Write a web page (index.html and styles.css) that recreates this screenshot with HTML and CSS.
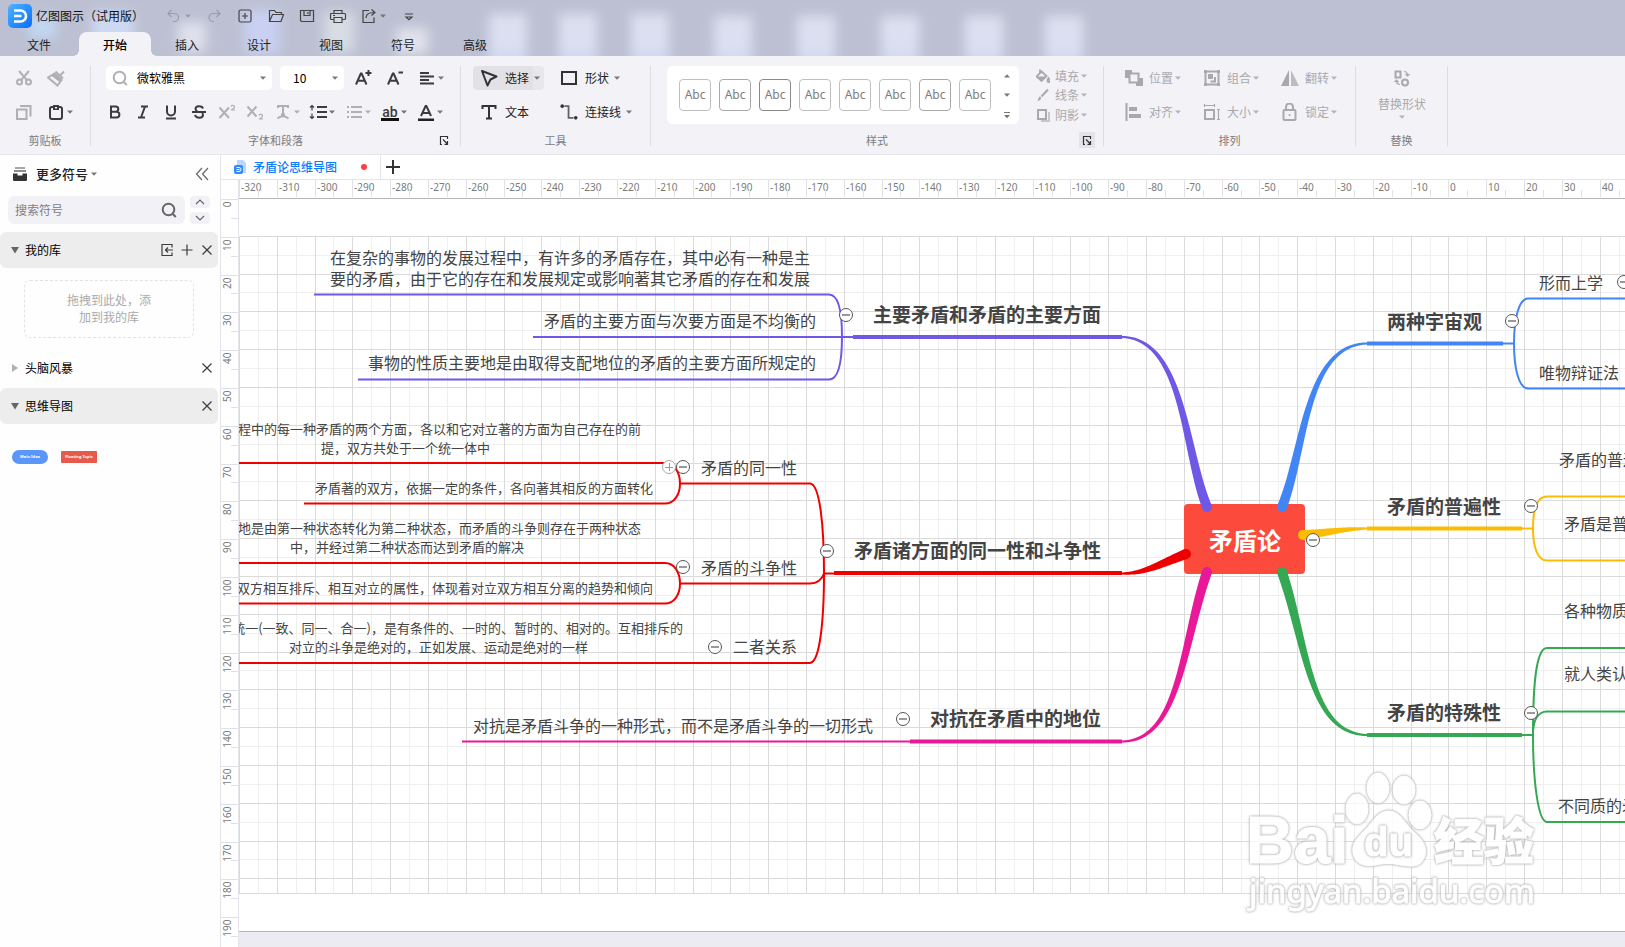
FILE: index.html
```html
<!DOCTYPE html>
<html lang="zh-CN">
<head>
<meta charset="utf-8">
<title>亿图图示（试用版）</title>
<link rel="stylesheet" href="styles.css">
</head>
<body>
<svg class="sprite" aria-hidden="true">
  <symbol id="caret" viewBox="0 0 8 8"><path d="M1 2.500h6L4 5.800z" fill="currentColor"/></symbol>
  <symbol id="i-undo" viewBox="0 0 18 18"><path d="M6.500 3 3 6.500 6.500 10M3 6.500h6.500a4 4 0 0 1 0 8H8" class="s1"/></symbol>
  <symbol id="i-redo" viewBox="0 0 18 18"><path d="M11.500 3 15 6.500 11.500 10M15 6.500H8a4 4 0 0 0 0 8h1" class="s1"/></symbol>
  <symbol id="i-new" viewBox="0 0 18 18"><rect x="3" y="3" width="12" height="12" rx="1.500" class="s1"/><path d="M9 6v6M6 9h6" class="s1"/></symbol>
  <symbol id="i-open" viewBox="0 0 18 18"><path d="M2.500 14.500V3.500h5l1.500 2h5.500v2M2.500 14.500l3-7h11l-2.500 7z" class="s1"/></symbol>
  <symbol id="i-save" viewBox="0 0 18 18"><path d="M2.500 3.500h13v11h-12l-1-1zM6 3.500v5h6v-5M10 5v2" class="s1"/></symbol>
  <symbol id="i-print" viewBox="0 0 18 18"><path d="M5 6.500v-3h8v3M5 12.500H2.500a1 1 0 0 1-1-1v-4a1 1 0 0 1 1-1h13a1 1 0 0 1 1 1v4a1 1 0 0 1-1 1H13M5 10.500h8v5H5zM4 8.500h2" class="s1"/></symbol>
  <symbol id="i-export" viewBox="0 0 18 18"><path d="M9 3.500H3v12h11v-5M6 11c0-4 3-5.500 8-5.500M11.500 2.500l3.500 3-3.500 3" class="s1"/></symbol>
  <symbol id="i-more" viewBox="0 0 18 18"><path d="M5 7h8M6 10l3 2.800L12 10z" class="s1"/></symbol>
  <symbol id="i-cut" viewBox="0 0 18 18"><g class="s2"><circle cx="4.500" cy="13" r="2.500"/><circle cx="13.500" cy="13" r="2.500"/><path d="M4 2l8 9.200M14 2l-8 9.200"/></g></symbol>
  <symbol id="i-brush" viewBox="0 0 18 18"><path d="M17 2.500 13.500 6" class="s2" stroke-width="4"/><path d="M8.500 2.500l7.500 7" class="s2"/><path d="M7.500 4.500l7 6.500-4 5.500L1 8.500z" class="s2"/><path d="M8 4.500l6.500 6-2 2.500-8-6z" fill="currentColor"/></symbol>
  <symbol id="i-copy" viewBox="0 0 18 18"><path d="M2 6.500h9.500V16H2zM5 3h10.500v10.500" class="s2"/></symbol>
  <symbol id="i-paste" viewBox="0 0 18 18"><rect x="3" y="4" width="12" height="12" rx="2" class="s2"/><path d="M6 2h6v5H6z" fill="currentColor"/><path d="M8 4h2v1.500H8z" fill="#f3f2f7"/></symbol>
  <symbol id="i-search" viewBox="0 0 18 18"><circle cx="8.500" cy="8.500" r="5.800" class="s2"/><path d="M12.800 13l3 3" class="s2"/></symbol>
  <symbol id="i-aplus" viewBox="0 0 18 18"><path d="M2 15.500 6.800 4.500h.8L12.500 15.500M3.800 11.800h7M11.500 4h6M14.500 1v6" class="s2"/></symbol>
  <symbol id="i-aminus" viewBox="0 0 18 18"><path d="M2 15.500 6.800 4.500h.8L12.500 15.500M3.800 11.800h7M12.500 3.500h4.500" class="s2"/></symbol>
  <symbol id="i-align" viewBox="0 0 18 18"><path d="M2 4h9M2 7.500h14M2 11h9M2 14.500h14" class="s2"/></symbol>
  <symbol id="i-bold" viewBox="0 0 18 18"><path d="M5 3.500h4.700a2.600 2.600 0 0 1 0 5.200H5zM5 8.700h5.500a2.900 2.900 0 0 1 0 5.800H5z" class="s2"/></symbol>
  <symbol id="i-italic" viewBox="0 0 18 18"><path d="M7 3.500h7M4 14.500h7M11 3.500l-4 11" class="s2"/></symbol>
  <symbol id="i-under" viewBox="0 0 18 18"><path d="M5 2.500v6a4 4 0 0 0 8 0v-6M4 15.500h10" class="s2"/></symbol>
  <symbol id="i-strike" viewBox="0 0 18 18"><path d="M13 5.500C12 2.500 5.500 2.500 5.500 6c0 1.500 1 2 2.500 3M5 12c1 3.500 8 3.500 8 0 0-1-.4-1.500-1-2M2 9h14" class="s2"/></symbol>
  <symbol id="i-sup" viewBox="0 0 18 18"><path d="M1.500 4.500 11 15M11 4.500 1.500 15" class="s2"/><path d="M13 3.500c.5-1.500 3.500-1.500 3.500.5C16.500 5.500 13 7 13 7h4" class="s1"/></symbol>
  <symbol id="i-sub" viewBox="0 0 18 18"><path d="M1.500 3.500 10.500 13.500M10.500 3.500 1.500 13.500" class="s2"/><path d="M13 12.500c.5-1.500 3.500-1.500 3.500.5 0 1.500-3.500 3-3.500 3h4" class="s1"/></symbol>
  <symbol id="i-case" viewBox="0 0 18 18"><path d="M4 5V3h10v2M9 3v8M7 11.500h4M3.500 15.500c3-3 8-3 11 0" class="s2"/></symbol>
  <symbol id="i-spacing" viewBox="0 0 18 18"><path d="M8 4h10M8 9h10M8 14h10" class="s2"/><path d="M3 3.500v4M3 10.500v4M1 4.500 3 2.500l2 2M1 13.500l2 2 2-2" class="s1"/></symbol>
  <symbol id="i-list" viewBox="0 0 18 18"><path d="M6 4h11M6 9h11M6 14h11M2 4h2M2 9h2M2 14h2" class="s2"/></symbol>
  <symbol id="i-color" viewBox="0 0 18 18"><path d="M4 13 8.600 3h.8L14 13M5.500 10h7" class="s2"/><path d="M1 15.500h16v2.500H1z" fill="#222"/></symbol>
  <symbol id="i-launch" viewBox="0 0 16 16"><path d="M6 12.500H4.500v-8h7V7M7 7.500l4.500 4.500M11.500 9v3.300H8.500" class="s1"/></symbol>
  <symbol id="i-select" viewBox="0 0 18 18"><path d="M2 2 16.500 7.500 10.500 10.500 7.500 16.500z" class="s2" stroke-linejoin="round"/></symbol>
  <symbol id="i-rect" viewBox="0 0 18 18"><rect x="2" y="3" width="14" height="12" class="s2"/></symbol>
  <symbol id="i-text" viewBox="0 0 18 18"><path d="M2.500 6V3h13v3M9 3v12.500M6 15.500h6" class="s2"/></symbol>
  <symbol id="i-conn" viewBox="0 0 20 18"><circle cx="2.500" cy="2.500" r="2" fill="currentColor"/><circle cx="17.500" cy="15.500" r="2" fill="currentColor"/><path d="M5 2.500h4.500v13H15" class="s2" opacity=".75"/></symbol>
  <symbol id="i-fill" viewBox="0 0 14 14"><path d="M4 .5v3M5.500 2.500l5 4.500-5 5-5-4.500zM12.500 9c1.500 2 1.500 4 0 4s-1.500-2 0-4z" fill="none" stroke="currentColor" stroke-width="1.800"/><path d="M1 7.500h9l-4.500 4z" fill="currentColor"/></symbol>
  <symbol id="i-line" viewBox="0 0 14 14"><path d="M12 1.500 5.500 8.500" class="s2"/><path d="M1 13c1.500-.5 1-4 3-4.500 2 1 1.500 4-3 4.500z" fill="currentColor"/></symbol>
  <symbol id="i-shadow" viewBox="0 0 14 14"><path d="M5 13h8V4" class="s2" opacity=".6"/><rect x="2" y="2" width="8" height="9" class="s2"/></symbol>
  <symbol id="i-pos" viewBox="0 0 18 18"><path d="M0 1h7v3H4v5H0zM18 17h-7v-3h3V9h4z" fill="currentColor"/><rect x="4.500" y="4.500" width="9" height="9" class="s2"/></symbol>
  <symbol id="i-group" viewBox="0 0 18 18"><rect x="2.500" y="2.500" width="13" height="13" class="s2"/><path d="M1 1h3v3H1zM14 1h3v3h-3zM1 14h3v3H1zM14 14h3v3h-3zM5 5h5v5H5z" fill="currentColor"/><path d="M12 8v4.500H7.500" class="s2"/></symbol>
  <symbol id="i-flip" viewBox="0 0 18 18"><path d="M8 1v16H0z" fill="currentColor"/><path d="M10 1v16h8z" fill="currentColor" opacity=".75"/></symbol>
  <symbol id="i-lalign" viewBox="0 0 18 18"><path d="M1.500 0v18" class="s2"/><path d="M4 4h8v4H4zM4 11h12v4H4z" fill="currentColor"/></symbol>
  <symbol id="i-size" viewBox="0 0 18 18"><rect x="2" y="7" width="9" height="9" class="s2"/><path d="M1 2.500h11M1.500 1v3M11.500 1v3M15.500 6v11M14 6.500h3M14 16.500h3" class="s1"/></symbol>
  <symbol id="i-lock" viewBox="0 0 18 18"><rect x="2.500" y="7" width="12" height="10" rx="1" class="s2"/><path d="M5 7V4a3.500 3.500 0 0 1 7 0v3M7.800 12h1.500" class="s2"/></symbol>
  <symbol id="i-swap" viewBox="0 0 18 18"><rect x="2.500" y="2.500" width="5" height="6" class="s2"/><circle cx="12" cy="13.500" r="3" class="s2"/><path d="M11 2.500c2 0 3.500 1 3.500 4M12.500 5l2 2 2-2M7 15.500c-2 0-3.500-1-3.500-4M1.500 13l2-2 2 2" class="s1"/></symbol>
  <symbol id="i-x" viewBox="0 0 14 14"><path d="M2.500 2.500l9 9M11.500 2.500l-9 9" class="s1"/></symbol>
  <symbol id="i-plus" viewBox="0 0 14 14"><path d="M7 1.500v11M1.500 7h11" class="s1"/></symbol>
  <symbol id="i-import" viewBox="0 0 14 14"><path d="M12 4.500v-3H2v11h10v-3M13 7H5.500M8 4.500 5.500 7 8 9.500" class="s1"/></symbol>
  <symbol id="i-down" viewBox="0 0 10 10"><path d="M1 2h8L5 8.500z" fill="currentColor"/></symbol>
  <symbol id="i-right" viewBox="0 0 10 10"><path d="M2 1v8l6-4z" fill="currentColor"/></symbol>
</svg>

<header class="titlebar">
  <svg class="glow" aria-hidden="true">
    <defs>
      <filter id="soft" x="-10%" y="-50%" width="120%" height="200%"><feGaussianBlur stdDeviation="6"/></filter>
      <linearGradient id="pane" x1="0" y1="0" x2="0" y2="1"><stop offset="0" stop-color="#dee0f0"/><stop offset=".6" stop-color="#dcdff0"/><stop offset="1" stop-color="#c3d4f6"/></linearGradient>
    </defs>
    <g filter="url(#soft)" fill="url(#pane)">
      <rect x="28" y="16" width="28" height="22" fill="#c2d8f2"/>
      <rect x="92" y="12" width="42" height="46" fill="#cdd9f3"/>
      <rect x="178" y="22" width="28" height="30" fill="#e0e0ec"/>
      <rect x="244" y="10" width="36" height="44" fill="#c9d0f2"/>
      <rect x="324" y="12" width="30" height="40" fill="#d7dde4"/>
      <rect x="396" y="28" width="32" height="26" fill="#e2e2ec"/>
      <rect x="489" y="14" width="38" height="54"/><rect x="559" y="14" width="38" height="54"/>
      <rect x="631" y="14" width="38" height="54"/><rect x="714" y="16" width="38" height="54"/>
      <rect x="797" y="16" width="38" height="54"/><rect x="881" y="16" width="38" height="54"/>
      <rect x="965" y="16" width="38" height="54"/><rect x="1045" y="16" width="38" height="54"/>
    </g>
  </svg>
  <div class="quickbar">
    <svg class="logo" viewBox="0 0 24 24" role="img" aria-label="亿图图示">
      <defs><linearGradient id="lg" x1="0" y1="0" x2="1" y2="1"><stop offset="0" stop-color="#4db5ff"/><stop offset="1" stop-color="#0a6cff"/></linearGradient></defs>
      <rect width="24" height="24" rx="5" fill="url(#lg)"/>
      <path d="M6 6.500h6.500a5.500 5.500 0 0 1 0 11H6M6 12h7.500" fill="none" stroke="#fff" stroke-width="2.600"/>
    </svg>
    <h1 class="app-name">亿图图示（试用版）</h1>
    <div class="quick-tools">
      <button class="ico faded" aria-label="撤销"><svg class="i18"><use href="#i-undo"/></svg><svg class="car"><use href="#caret"/></svg></button>
      <button class="ico faded" aria-label="重做"><svg class="i18"><use href="#i-redo"/></svg></button>
      <button class="ico" aria-label="新建"><svg class="i18"><use href="#i-new"/></svg></button>
      <button class="ico" aria-label="打开"><svg class="i18"><use href="#i-open"/></svg></button>
      <button class="ico" aria-label="保存"><svg class="i18"><use href="#i-save"/></svg></button>
      <button class="ico" aria-label="打印"><svg class="i18"><use href="#i-print"/></svg></button>
      <button class="ico" aria-label="导出"><svg class="i18"><use href="#i-export"/></svg><svg class="car"><use href="#caret"/></svg></button>
      <button class="ico" aria-label="更多"><svg class="i18"><use href="#i-more"/></svg></button>
    </div>
  </div>
  <nav class="menu">
    <button class="menu-tab">文件</button><button class="menu-tab active">开始</button><button class="menu-tab">插入</button><button class="menu-tab">设计</button><button class="menu-tab">视图</button><button class="menu-tab">符号</button><button class="menu-tab">高级</button>
  </nav>
</header>

<section class="ribbon">
  <div class="group clipboard">
    <div class="row"><button class="ico off" aria-label="剪切"><svg class="i18"><use href="#i-cut"/></svg></button><button class="ico off" aria-label="格式刷"><svg class="i18"><use href="#i-brush"/></svg></button></div>
    <div class="row"><button class="ico off" aria-label="复制"><svg class="i18"><use href="#i-copy"/></svg></button><button class="ico" aria-label="粘贴"><svg class="i18"><use href="#i-paste"/></svg><svg class="car"><use href="#caret"/></svg></button></div>
    <div class="caption"><span>剪贴板</span></div>
  </div>
  <div class="group font">
    <div class="row">
      <label class="combo family"><svg class="i18 off"><use href="#i-search"/></svg><select aria-label="字体"><option>微软雅黑</option></select><svg class="car"><use href="#caret"/></svg></label>
      <label class="combo size"><select aria-label="字号"><option>10</option></select><svg class="car"><use href="#caret"/></svg></label>
      <div class="cluster wide"><button class="ico" aria-label="增大字号"><svg class="i18"><use href="#i-aplus"/></svg></button><button class="ico" aria-label="减小字号"><svg class="i18"><use href="#i-aminus"/></svg></button><button class="ico" aria-label="对齐方式"><svg class="i18"><use href="#i-align"/></svg><svg class="car"><use href="#caret"/></svg></button></div>
    </div>
    <div class="row">
      <div class="cluster">
        <button class="ico" aria-label="加粗"><svg class="i18"><use href="#i-bold"/></svg></button><button class="ico" aria-label="斜体"><svg class="i18"><use href="#i-italic"/></svg></button><button class="ico" aria-label="下划线"><svg class="i18"><use href="#i-under"/></svg></button><button class="ico" aria-label="删除线"><svg class="i18"><use href="#i-strike"/></svg></button><button class="ico off" aria-label="上标"><svg class="i18"><use href="#i-sup"/></svg></button><button class="ico off" aria-label="下标"><svg class="i18"><use href="#i-sub"/></svg></button><button class="ico off" aria-label="文字方向"><svg class="i18"><use href="#i-case"/></svg><svg class="car"><use href="#caret"/></svg></button>
      </div>
      <div class="cluster snug">
        <button class="ico" aria-label="行距"><svg class="i18"><use href="#i-spacing"/></svg><svg class="car"><use href="#caret"/></svg></button><button class="ico off" aria-label="项目符号"><svg class="i18"><use href="#i-list"/></svg><svg class="car"><use href="#caret"/></svg></button><button class="ico" aria-label="突出显示"><span class="highlight">ab</span><svg class="car"><use href="#caret"/></svg></button><button class="ico" aria-label="字体颜色"><svg class="i18"><use href="#i-color"/></svg><svg class="car"><use href="#caret"/></svg></button>
      </div>
    </div>
    <div class="caption"><span>字体和段落</span><button class="launch" aria-label="字体设置"><svg class="i16"><use href="#i-launch"/></svg></button></div>
  </div>
  <div class="group tools">
    <div class="pairs">
      <button class="tool on"><svg class="i18"><use href="#i-select"/></svg><span>选择</span><svg class="car"><use href="#caret"/></svg></button>
      <button class="tool"><svg class="i18"><use href="#i-rect"/></svg><span>形状</span><svg class="car"><use href="#caret"/></svg></button>
      <button class="tool"><svg class="i18"><use href="#i-text"/></svg><span>文本</span></button>
      <button class="tool"><svg class="i18"><use href="#i-conn"/></svg><span>连接线</span><svg class="car"><use href="#caret"/></svg></button>
    </div>
    <div class="caption"><span>工具</span></div>
  </div>
  <div class="group styles">
    <div class="style-row">
      <div class="gallery">
        <button class="swatch">Abc</button><button class="swatch mid">Abc</button><button class="swatch dark">Abc</button><button class="swatch">Abc</button><button class="swatch">Abc</button><button class="swatch">Abc</button><button class="swatch mid">Abc</button><button class="swatch">Abc</button>
        <div class="pager">
          <button class="ico" aria-label="上一行"><svg class="car" viewBox="0 0 8 8"><path d="M1 5.500h6L4 2.200z" fill="currentColor"/></svg></button>
          <button class="ico" aria-label="下一行"><svg class="car"><use href="#caret"/></svg></button>
          <button class="ico" aria-label="全部样式"><svg class="car" viewBox="0 0 8 8"><path d="M1 1h6v1H1zM1 4h6L4 7.300z" fill="currentColor"/></svg></button>
        </div>
      </div>
      <div class="stack">
        <button class="mini"><svg class="i14"><use href="#i-fill"/></svg><span>填充</span><svg class="car"><use href="#caret"/></svg></button>
        <button class="mini"><svg class="i14"><use href="#i-line"/></svg><span>线条</span><svg class="car"><use href="#caret"/></svg></button>
        <button class="mini"><svg class="i14"><use href="#i-shadow"/></svg><span>阴影</span><svg class="car"><use href="#caret"/></svg></button>
      </div>
    </div>
    <div class="caption"><span>样式</span><button class="launch lit" aria-label="样式设置"><svg class="i16"><use href="#i-launch"/></svg></button></div>
  </div>
  <div class="group arrange">
    <div class="triples">
      <button class="mini"><svg class="i18"><use href="#i-pos"/></svg><span>位置</span><svg class="car"><use href="#caret"/></svg></button>
      <button class="mini"><svg class="i18"><use href="#i-group"/></svg><span>组合</span><svg class="car"><use href="#caret"/></svg></button>
      <button class="mini"><svg class="i18"><use href="#i-flip"/></svg><span>翻转</span><svg class="car"><use href="#caret"/></svg></button>
      <button class="mini"><svg class="i18"><use href="#i-lalign"/></svg><span>对齐</span><svg class="car"><use href="#caret"/></svg></button>
      <button class="mini"><svg class="i18"><use href="#i-size"/></svg><span>大小</span><svg class="car"><use href="#caret"/></svg></button>
      <button class="mini"><svg class="i18"><use href="#i-lock"/></svg><span>锁定</span><svg class="car"><use href="#caret"/></svg></button>
    </div>
    <div class="caption"><span>排列</span></div>
  </div>
  <div class="group replace">
    <button class="tall"><svg class="i18"><use href="#i-swap"/></svg><span>替换形状</span><svg class="car"><use href="#caret"/></svg></button>
    <div class="caption"><span>替换</span></div>
  </div>
</section>

<main class="work">
  <aside class="library">
    <div class="lib-head">
      <svg class="drawer" viewBox="0 0 14 14"><path d="M2 1h10" stroke="#8a8a8a" stroke-width="1.500"/><path d="M1 4h12" stroke="#666" stroke-width="1.500"/><path d="M0 6.500h4.500v2h5v-2H14V13a1 1 0 0 1-1 1H1a1 1 0 0 1-1-1z" fill="#333"/></svg>
      <button class="lib-title">更多符号<svg class="car"><use href="#caret"/></svg></button>
      <button class="ico fold" aria-label="收起"><svg class="i14" viewBox="0 0 14 14"><path d="M7 1 1.500 7 7 13M13 1 7.500 7 13 13" class="s1"/></svg></button>
    </div>
    <div class="lib-search">
      <label class="search"><input type="text" placeholder="搜索符号" aria-label="搜索符号"><svg class="i18"><use href="#i-search"/></svg></label>
      <div class="steppers"><button aria-label="上一个"><svg viewBox="0 0 10 6"><path d="M1 5l4-4 4 4" class="s1"/></svg></button><button aria-label="下一个"><svg viewBox="0 0 10 6"><path d="M1 1l4 4 4-4" class="s1"/></svg></button></div>
    </div>
    <div class="lib-row shaded"><svg class="tri"><use href="#i-down"/></svg><h2>我的库</h2><button class="ico" aria-label="导入"><svg class="i14"><use href="#i-import"/></svg></button><button class="ico" aria-label="添加"><svg class="i14"><use href="#i-plus"/></svg></button><button class="ico" aria-label="关闭我的库"><svg class="i14"><use href="#i-x"/></svg></button></div>
    <p class="drop">拖拽到此处，添<br>加到我的库</p>
    <div class="lib-row"><svg class="tri pale"><use href="#i-right"/></svg><h2>头脑风暴</h2><button class="ico" aria-label="关闭头脑风暴"><svg class="i14"><use href="#i-x"/></svg></button></div>
    <div class="lib-row shaded"><svg class="tri"><use href="#i-down"/></svg><h2>思维导图</h2><button class="ico" aria-label="关闭思维导图"><svg class="i14"><use href="#i-x"/></svg></button></div>
    <div class="shapes"><button class="shape idea">Main Idea</button><button class="shape topic">Floating Topic</button></div>
  </aside>

  <section class="editor">
    <div class="doc-tabs">
      <div class="doc-tab"><svg class="doc-ico" viewBox="0 0 12 14"><path d="M3 0h6l3 3v10H3z" fill="#b9d8ff"/><rect y="5" width="9" height="9" rx="2" fill="#2b8cff"/><path d="M2.500 7.500h2.500a2 2 0 0 1 0 4H2.500M2.500 9.500h3" fill="none" stroke="#fff"/></svg><span>矛盾论思维导图</span><i class="unsaved"></i></div>
      <button class="ico add" aria-label="新建页面"><svg class="i14" viewBox="0 0 14 14"><path d="M7 0v14M0 7h14" stroke="#333" stroke-width="2"/></svg></button>
    </div>
    <div class="sheet">
      <div class="corner"></div>
      <svg class="ruler-x" id="ruler-x"></svg>
      <svg class="ruler-y" id="ruler-y"></svg>
      <div class="canvas" id="canvas">
        <svg class="map">
          <g id="grid"></g>
          <g transform="translate(-239 -198)">
            <rect x="1184" y="504" width="121" height="70" rx="4" fill="#fc4a3c"/>
            <g class="link purple">
              <path d="M314 294.500H829C838 294.500 842 310 842 336.500C842 364 838 379.500 829 379.500H358M533 337H853"/><path class="bar" d="M853 337H1122"/>
            </g>
            <g class="link red">
              <path d="M239 463H665C674 463 680 472 680 483.500C680 495 674 503.500 665 503.500H304M239 563H665C674 563 680 572 680 583.500C680 595 674 603.500 665 603.500H239M239 663H810C820 662 824 620 824 573C824 527 820 484 810 483.500H680M680 583.500H810C818 583.500 822 579 824 573.500H834"/><path class="bar" d="M834 573H1122"/>
            </g>
            <g class="link pink"><path d="M462 741.500H910"/><path class="bar" d="M910 741.500H1122"/></g>
            <g class="link blue"><path d="M1503 343.500H1514C1514 318 1519 298.500 1528 298.500H3000M1514 343.500C1514 369 1519 388.500 1528 388.500H3000"/><path class="bar" d="M1367 343.500H1503"/></g>
            <g class="link yellow"><path d="M1522 528.500H1533C1533 507 1538 496.500 1547 496.500H3000M1533 528.500C1533 548 1538 560.500 1547 560.500H3000"/><path class="bar" d="M1367 528.500H1522"/></g>
            <g class="link green"><path d="M1522 735H1533C1533 685 1536 648 1547 648H3000M1533 735C1533 720 1538 711.500 1547 711.500H3000M1533 735C1533 780 1538 822 1547 822H3000"/><path class="bar" d="M1367 735H1522"/></g>
            <g id="limbs"></g>
            <text class="t-root" x="1209" y="550">矛盾论</text>
            <g class="t-main">
              <text x="873" y="322">主要矛盾和矛盾的主要方面</text>
              <text x="854" y="558">矛盾诸方面的同一性和斗争性</text>
              <text x="930" y="726">对抗在矛盾中的地位</text>
              <text x="1387" y="329">两种宇宙观</text>
              <text x="1387" y="514">矛盾的普遍性</text>
              <text x="1387" y="720">矛盾的特殊性</text>
            </g>
            <g class="t-sub">
              <text x="330" y="264">在复杂的事物的发展过程中，有许多的矛盾存在，其中必有一种是主</text>
              <text x="330" y="285">要的矛盾，由于它的存在和发展规定或影响著其它矛盾的存在和发展</text>
              <text x="544" y="327">矛盾的主要方面与次要方面是不均衡的</text>
              <text x="368" y="369">事物的性质主要地是由取得支配地位的矛盾的主要方面所规定的</text>
              <text x="701" y="474">矛盾的同一性</text>
              <text x="701" y="574">矛盾的斗争性</text>
              <text x="733" y="653">二者关系</text>
              <text x="473" y="732">对抗是矛盾斗争的一种形式，而不是矛盾斗争的一切形式</text>
              <text x="1539" y="289">形而上学</text>
              <text x="1539" y="379">唯物辩证法</text>
              <text x="1559" y="466">矛盾的普遍性</text>
              <text x="1564" y="530">矛盾是普遍的</text>
              <text x="1564" y="617">各种物质</text>
              <text x="1564" y="680">就人类认</text>
              <text x="1558" y="812">不同质的矛</text>
            </g>
            <g class="t-leaf">
              <text x="238" y="434">程中的每一种矛盾的两个方面，各以和它对立著的方面为自己存在的前</text>
              <text x="321" y="453">提，双方共处于一个统一体中</text>
              <text x="315" y="493">矛盾著的双方，依据一定的条件，各向著其相反的方面转化</text>
              <text x="238" y="533">地是由第一种状态转化为第二种状态，而矛盾的斗争则存在于两种状态</text>
              <text x="290" y="552">中，并经过第二种状态而达到矛盾的解决</text>
              <text x="237" y="593">双方相互排斥、相互对立的属性，体现着对立双方相互分离的趋势和倾向</text>
              <text x="683" y="633" text-anchor="end">统一(一致、同一、合一)，是有条件的、一时的、暂时的、相对的。互相排斥的</text>
              <text x="289" y="652">对立的斗争是绝对的，正如发展、运动是绝对的一样</text>
            </g>
            <g class="mark">
              <text class="m-latin" x="1246" y="863">Bai</text>
              <g class="m-paw"><ellipse cx="1357" cy="809" rx="11" ry="15"/><ellipse cx="1378" cy="788" rx="11" ry="15"/><ellipse cx="1404" cy="790" rx="11" ry="14"/><ellipse cx="1420" cy="815" rx="11" ry="14"/>
              <path d="M1389 811C1400 811 1405 824 1415 833C1424 840 1428 850 1424 858C1420 869 1408 866 1400 865C1392 863 1384 863 1376 865C1366 867 1355 865 1353 853C1351 843 1359 836 1366 829C1373 822 1377 811 1389 811Z"/></g>
              <text class="m-du" x="1364" y="856">du</text>
              <text class="m-cjk" x="1434" y="860">经验</text>
              <text class="m-url" x="1249" y="903">jingyan.baidu.com</text>
            </g>
          </g>
        </svg>
      </div>
    </div>
  </section>
</main>
<script src="map.js"></script>
</body>
</html>
```
FILE: styles.css
```css
* { box-sizing: border-box; }
body {
  margin: 0;
  height: 100vh;
  display: flex;
  flex-direction: column;
  overflow: hidden;
  background: #fff;
  color: #222;
  font: 12px/18px "Noto Sans CJK SC", "Noto Sans", sans-serif;
}
button, input, select { font: inherit; color: inherit; border: 0; background: none; padding: 0; margin: 0; }
h1, h2, p { margin: 0; font-size: 12px; font-weight: 400; }
svg { display: block; flex: none; }
.sprite { position: absolute; width: 0; height: 0; }
.s1, .s2 { fill: none; stroke: currentColor; }
.s1 { stroke-width: 1.2; }
.s2 { stroke-width: 2; }
.i18 { width: 18px; height: 18px; }
.i16 { width: 16px; height: 16px; }
.i14 { width: 14px; height: 14px; }
.car { width: 8px; height: 8px; color: #777; }
.ico { display: inline-flex; align-items: center; gap: 1px; color: #3c3c3c; }
.off, .off .car { color: #b0b0b4; }

/* title bar */
.titlebar { position: relative; background: #bcc0d2; }
.glow { position: absolute; inset: 0; width: 100%; height: 100%; }
.quickbar { position: relative; display: flex; align-items: center; height: 32px; padding-left: 8px; }
.logo { width: 24px; height: 24px; }
.app-name { margin-left: 4px; color: #111; }
.quick-tools { display: flex; gap: 13px; margin-left: 21px; }
.quick-tools .ico { color: #444; }
.quick-tools .faded, .faded .car { color: #999cab; }
.menu { position: relative; display: flex; padding-left: 3px; }
.menu-tab { width: 72px; height: 24px; padding-top: 1px; color: #222; }
.menu-tab.active { position: relative; margin-left: 4px; background: #f3f2f7; border-radius: 8px 8px 0 0; font-weight: 500; color: #000; }
.menu-tab.active::before, .menu-tab.active::after {
  content: ""; position: absolute; bottom: 0; width: 6px; height: 6px;
}
.menu-tab.active::before { right: 100%; background: radial-gradient(circle at 0 0, transparent 6px, #f3f2f7 6px); }
.menu-tab.active::after { left: 100%; background: radial-gradient(circle at 100% 0, transparent 6px, #f3f2f7 6px); }

/* ribbon */
.ribbon { display: flex; padding: 10px 0 8px; background: #f3f2f7; border-bottom: 1px solid #e6e6ec; }
.group { display: flex; flex-direction: column; gap: 10px; border-right: 1px solid #dcdce2; }
.row, .cluster { display: flex; align-items: center; height: 24px; }
.caption { display: grid; grid-template-columns: 1fr auto 1fr; align-items: center; align-content: center; height: 12px; font-size: 11px; line-height: 12px; color: #7c7c80; }
.caption span { grid-column: 2; }
.launch { justify-self: end; color: #333; }
.launch.lit { background: #e4e3e8; }
.clipboard .row { gap: 14px; padding: 0 16px 0 15px; }
.font .row { padding: 0 15px; }
.font .caption, .styles .caption { padding: 0 8px; }
.cluster { gap: 10px; }
.cluster.wide { gap: 14px; margin-left: 10px; }
.cluster.snug { gap: 9px; margin-left: 8px; }
.highlight { width: 18px; height: 18px; border-bottom: 3px solid #111; font: 500 14px/18px Roboto, sans-serif; text-align: center; }
.combo { display: flex; align-items: center; height: 24px; background: #fff; border-radius: 5px; padding: 0 5px; color: #000; }
.combo select { flex: 1; min-width: 0; appearance: none; outline: 0; }
.family { width: 166px; }
.family select { padding-left: 8px; }
.size { width: 64px; margin-left: 8px; }
.size select { padding-left: 8px; }
.pairs { display: grid; grid-template-columns: auto auto; gap: 10px 9px; padding: 0 14px 0 12px; justify-items: start; }
.tool { display: flex; align-items: center; height: 24px; padding: 0 3px 0 7px; border-radius: 4px; color: #333; }
.tool span { margin: 0 4px 0 7px; color: #222; }
.tool.on { background: linear-gradient(90deg, #e2e1e6 60px, #e8e7ec 60px); }
.style-row { display: flex; gap: 17px; padding: 0 15px 0 16px; }
.gallery { display: flex; align-items: center; gap: 8px; height: 58px; padding-left: 12px; background: #fff; border-radius: 6px; }
.swatch { width: 32px; height: 32px; border: 1px solid #c0c0c0; border-radius: 4px; color: #7c7c7c; font-family: "Noto Sans", sans-serif; }
.swatch.mid { border-color: #aaa; }
.swatch.dark { border-color: #8a8a8a; }
.pager, .stack { display: flex; flex-direction: column; justify-content: space-between; height: 58px; }
.pager { width: 20px; padding: 0 4px; }
.pager .ico, .stack .mini { height: 19px; }
.mini { display: flex; align-items: center; color: #a9a9ad; }
.mini .car, .tall .car { color: #b4b4b8; }
.stack .mini span { margin: 0 1px 0 5px; }
.triples { display: grid; grid-template-columns: auto auto auto; gap: 10px 21px; padding: 0 17px 0 21px; }
.triples .mini { height: 24px; }
.triples .mini span { margin: 0 1px 0 6px; }
.tall { display: flex; flex-direction: column; align-items: center; height: 58px; padding: 3px 21px 0 22px; color: #a9a9ad; }
.tall span { margin-top: 8px; }

/* symbol library */
.work { flex: 1; display: flex; min-height: 0; }
.library { width: 221px; flex: none; border-right: 1px solid #e4e4ea; background: #fefefe; }
.lib-head { display: flex; align-items: center; height: 41px; padding: 0 11px 4px 13px; }
.drawer { width: 14px; height: 14px; }
.lib-title { display: flex; align-items: center; gap: 2px; margin-left: 9px; font-size: 13px; font-weight: 500; }
.fold { margin-left: auto; color: #666; }
.lib-search { display: flex; gap: 5px; padding: 0 10px 8px 8px; }
.search { flex: 1; display: flex; align-items: center; height: 28px; padding: 0 7px; background: #f2f1f6; border-radius: 6px; color: #666; }
.search input { flex: 1; min-width: 0; outline: 0; }
.search input::placeholder { color: #808084; }
.steppers { display: flex; flex-direction: column; gap: 4px; }
.steppers button { width: 20px; height: 12px; display: grid; place-items: center; background: #f2f1f6; border-radius: 4px; color: #666; }
.steppers svg { width: 10px; height: 6px; }
.lib-row { display: flex; align-items: center; gap: 6px; height: 36px; margin: 0 2px 2px 0; padding: 0 4px 0 10px; color: #000; }
.lib-row.shaded { background: #ededed; border-radius: 6px; }
.lib-row h2 { flex: 1; margin-left: -1px; }
.tri { width: 10px; height: 10px; color: #666; }
.tri.pale { color: #b0b0b0; }
.drop { margin: 12px 26px 12px 24px; padding: 10px 0; height: 58px; border: 1px dashed #e2e2e2; border-radius: 6px; line-height: 17px; text-align: center; color: #aaa; }
.shapes { display: flex; align-items: center; gap: 13px; padding: 24px 12px; }
.shape { height: 14px; width: 36px; color: #fff; font: 700 4px/14px "Noto Sans", sans-serif; }
.idea { background: #5b96fa; border-radius: 7px; }
.topic { height: 12px; line-height: 12px; background: #e65a4e; border-radius: 1px; }

/* document area */
.editor { flex: 1; min-width: 0; display: flex; flex-direction: column; }
.doc-tabs { display: flex; align-items: center; height: 25px; border-bottom: 1px solid #e4e4ea; }
.doc-tab { display: flex; align-items: center; height: 24px; padding: 0 13px; border-right: 1px solid #e4e4ea; color: #0f7bff; font-weight: 500; }
.doc-ico { width: 12px; height: 14px; margin-right: 7px; }
.unsaved { width: 6px; height: 6px; margin: 0 0 0 24px; border-radius: 50%; background: #ff4040; }
.add { margin-left: 5px; }
.sheet { flex: 1; min-height: 0; display: grid; grid-template: 18px 1fr / 18px 1fr; }
.corner { border-right: 1px solid #e4e4ea; }
.ruler-x, .ruler-y { width: 100%; height: 100%; overflow: hidden; font: 10px "Noto Sans", sans-serif; fill: #7a7a7a; }
.ruler-y { min-height: 0; border-right: 1px solid #e4e4ea; }
.ruler-x path, .ruler-y path { fill: none; stroke: #e0e0e8; }
.canvas { position: relative; overflow: hidden; min-height: 0; }
.map { width: 100%; height: 100%; }
.map text { fill: #444; }
.minor { stroke: #efefef; fill: none; }
.major { stroke: #dadada; fill: none; }
.edge { stroke: #b4b4b4; fill: none; }
.outside { fill: #ecebf1; }
.link { fill: none; stroke-width: 2; }
.link .bar { stroke-width: 4; }
.purple { stroke: #6f58e6; }
.red { stroke: #ee0000; }
.pink { stroke: #e81899; }
.blue { stroke: #4285f4; }
.yellow { stroke: #fbbc04; }
.green { stroke: #34a853; }
.map .t-root { font-size: 24px; font-weight: 700; fill: #fff; }
.t-main { font-size: 19px; font-weight: 700; }
.t-sub { font-size: 16px; }
.t-leaf { font-size: 13px; }
.mark { fill: #fff; stroke: #fff; stroke-width: 1; opacity: .8; }
.map .mark text { fill: #fff; }
.mark > * { filter: drop-shadow(0 0 1px #999) drop-shadow(0 0 1px #ccc); }
.m-latin { font: 700 66px "Liberation Sans", sans-serif; }
.m-du { font: 700 40px "Liberation Sans", sans-serif; }
.m-cjk { font-size: 50px; font-weight: 900; }
.m-url { font: 33px "Noto Sans", sans-serif; }
.toggle { position: absolute; width: 14px; height: 14px; border: 1px solid #555; border-radius: 50%; background: #fff; }
.toggle::before, .toggle.more::after { content: ""; position: absolute; left: 2px; top: 5px; width: 8px; height: 2px; background: #999; }
.toggle.more { border-color: #aaa; }
.toggle.more::before { top: 6px; height: 1px; }
.toggle.more::after { left: 6px; top: 2px; width: 1px; height: 8px; }
```
FILE: map.js
```js
const NS = "http://www.w3.org/2000/svg";
const ORIGIN = { x: 239, y: 198 };
const PX_PER_MM = 96 / 25.4;

function add(parent, tag, attrs, text) {
  const el = document.createElementNS(NS, tag);
  for (const key in attrs) el.setAttribute(key, attrs[key]);
  if (text !== undefined) el.textContent = text;
  parent.appendChild(el);
  return el;
}

/* rulers: a long tick and a label every 10 mm, a short tick between */
const rulerX = document.getElementById("ruler-x");
const rulerY = document.getElementById("ruler-y");
function drawRulers() {
  rulerX.replaceChildren();
  rulerY.replaceChildren();
  const width = rulerX.getBoundingClientRect().width;
  const height = rulerY.getBoundingClientRect().height;
  for (let mm = 0; mm * PX_PER_MM < width; mm += 5) {
    const x = Math.round(mm * PX_PER_MM) + 0.5;
    const major = mm % 10 === 0;
    add(rulerX, "path", { d: `M${x} ${major ? 0 : 10}V17` });
    if (major) add(rulerX, "text", { x: x + 1.5, y: 11 }, mm - 320);
  }
  for (let mm = 0; mm * PX_PER_MM < height - 3; mm += 5) {
    const y = Math.round(mm * PX_PER_MM) + 1.5;
    const major = mm % 10 === 0;
    add(rulerY, "path", { d: `M${major ? 0 : 10} ${y}H18` });
    if (major) add(rulerY, "text", { transform: `translate(10 ${y + 2}) rotate(-90)`, "text-anchor": "end" }, mm);
  }
}
drawRulers();
window.addEventListener("resize", drawRulers);

/* page and grid */
const grid = document.getElementById("grid");
const PAGE_BOTTOM = 733, GRID_TOP = 38, GRID_BOTTOM = 695;
["minor", "major"].forEach((kind) => {
  let d = "";
  for (let mm = kind === "minor" ? 5 : 0; mm <= 800; mm += 10) {
    const p = Math.round(mm * PX_PER_MM) + 0.5;
    d += `M${p} ${GRID_TOP}V${GRID_BOTTOM}`;
    if (p + 1 >= GRID_TOP && p < GRID_BOTTOM) d += `M0 ${p}H3000`;
  }
  if (kind === "major") d += `M0 ${GRID_BOTTOM + 0.5}H3000`;
  add(grid, "path", { class: kind, d });
});
add(grid, "rect", { class: "outside", x: 0, y: PAGE_BOTTOM, width: 3000, height: 2000 });
add(grid, "path", { class: "edge", d: `M0 0.5H3000M0 ${PAGE_BOTTOM + 0.5}H3000` });

/* tapered limbs from each branch to the root topic */
const limbs = [
  ["#6f58e6", [1121, 337], [1184, 337], [1184, 450], [1207, 507]],
  ["#4285f4", [1368, 343.5], [1305, 343.5], [1305, 450], [1282, 507]],
  ["#e81899", [1121, 741.5], [1180, 742], [1182, 645], [1207, 572]],
  ["#34a853", [1368, 735], [1309, 735], [1307, 645], [1282, 572]],
  ["#ee0000", [1121, 573.5], [1145, 573.5], [1155, 566], [1186, 554]],
  ["#fbbc04", [1368, 528.5], [1345, 528.5], [1325, 533], [1303, 535]],
];
const layer = document.getElementById("limbs");
for (const [fill, a, b, c, d] of limbs) {
  const left = [], right = [];
  for (let i = 0; i <= 40; i++) {
    const t = i / 40, u = 1 - t;
    const at = (k) => u * u * u * a[k] + 3 * u * u * t * b[k] + 3 * u * t * t * c[k] + t * t * t * d[k];
    const dir = (k) => u * u * (b[k] - a[k]) + 2 * u * t * (c[k] - b[k]) + t * t * (d[k] - c[k]);
    const dx = dir(0), dy = dir(1), len = Math.hypot(dx, dy), half = 1 + 4 * t;
    left.push(`${at(0) - dy / len * half},${at(1) + dx / len * half}`);
    right.unshift(`${at(0) + dy / len * half},${at(1) - dx / len * half}`);
  }
  add(layer, "polygon", { fill, points: left.concat(right).join(" ") });
  add(layer, "circle", { fill, cx: d[0], cy: d[1], r: 5 });
}

/* fold buttons */
const toggles = [
  [846, 315], [683, 467], [683, 567], [715, 647], [827, 551], [903, 719], [1313, 540],
  [1512, 321], [1624, 282], [1531, 506], [1531, 713], [669, 467, "more"],
];
const canvas = document.getElementById("canvas");
for (const [x, y, kind] of toggles) {
  const button = document.createElement("button");
  button.className = kind ? "toggle " + kind : "toggle";
  button.setAttribute("aria-label", kind ? "展开" : "折叠");
  button.style.left = x - 7 - ORIGIN.x + "px";
  button.style.top = y - 7 - ORIGIN.y + "px";
  canvas.appendChild(button);
}
```
